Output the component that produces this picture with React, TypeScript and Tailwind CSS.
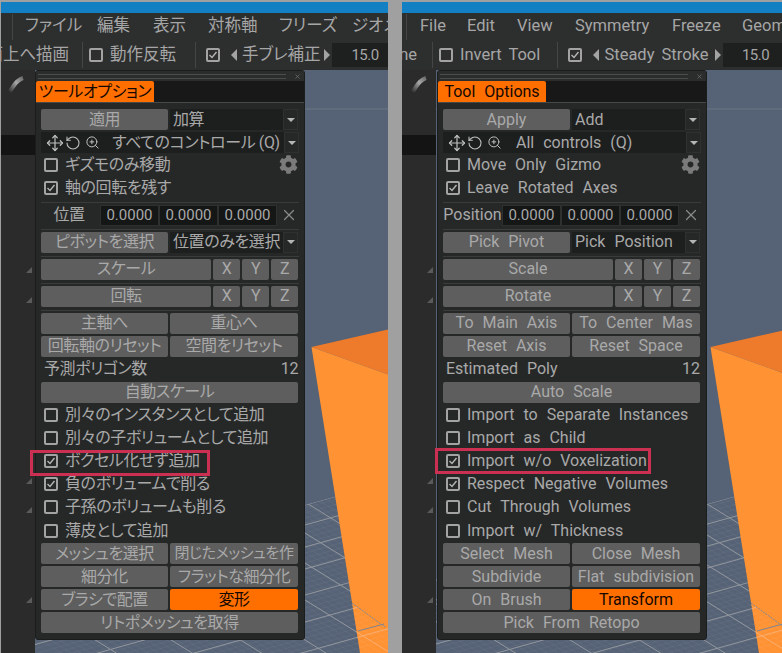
import { Move, RotateCcw, ZoomIn, X } from "lucide-react";
import { FaCog } from "react-icons/fa";

const jaText = {
  menu: [
    { label: "ファイル", cls: "ml-[12px] w-[72px]" },
    { label: "編集", cls: "w-[56px]" },
    { label: "表示", cls: "w-[55px]" },
    { label: "対称軸", cls: "w-[71px]" },
    { label: "フリーズ", cls: "w-[73px]" },
    { label: "ジオメ", cls: "w-[40px]" },
  ],
  cut: "面上へ描画",
  invert: "動作反転",
  steady: "手ブレ補正",
  title: "ツールオプション",
  apply: "適用",
  add: "加算",
  controls: "すべてのコントロール (Q)",
  gizmo: "ギズモのみ移動",
  leave: "軸の回転を残す",
  position: "位置",
  pivot: "ピボットを選択",
  pickPos: "位置のみを選択",
  scale: "スケール",
  rotate: "回転",
  pairs: [
    ["主軸へ", "重心へ"],
    ["回転軸のリセット", "空間をリセット"],
  ],
  poly: "予測ポリゴン数",
  auto: "自動スケール",
  checks: [
    { label: "別々のインスタンスとして追加", on: false },
    { label: "別々の子ボリュームとして追加", on: false },
    { label: "ボクセル化せず追加", on: true },
    { label: "負のボリュームで削る", on: true },
    { label: "子孫のボリュームも削る", on: false },
    { label: "薄皮として追加", on: false },
  ],
  mesh: ["メッシュを選択", "閉じたメッシュを作"],
  subdiv: ["細分化", "フラットな細分化"],
  brush: "ブラシで配置",
  transform: "変形",
  retopo: "リトポメッシュを取得",
};

const enText = {
  menu: [
    { label: "File", cls: "ml-[13px] w-[47px]" },
    { label: "Edit", cls: "w-[50px]" },
    { label: "View", cls: "w-[58px]" },
    { label: "Symmetry", cls: "w-[97px]" },
    { label: "Freeze", cls: "w-[70px]" },
    { label: "Geom", cls: "w-[40px]" },
  ],
  cut: "ne",
  invert: "Invert Tool",
  steady: "Steady Stroke",
  title: "Tool Options",
  apply: "Apply",
  add: "Add",
  controls: "All controls (Q)",
  gizmo: "Move Only Gizmo",
  leave: "Leave Rotated Axes",
  position: "Position",
  pivot: "Pick Pivot",
  pickPos: "Pick Position",
  scale: "Scale",
  rotate: "Rotate",
  pairs: [
    ["To Main Axis", "To Center Mas"],
    ["Reset Axis", "Reset Space"],
  ],
  poly: "Estimated Poly",
  auto: "Auto Scale",
  checks: [
    { label: "Import to Separate Instances", on: false },
    { label: "Import as Child", on: false },
    { label: "Import w/o Voxelization", on: true },
    { label: "Respect Negative Volumes", on: true },
    { label: "Cut Through Volumes", on: false },
    { label: "Import w/ Thickness", on: false },
  ],
  mesh: ["Select Mesh", "Close Mesh"],
  subdiv: ["Subdivide", "Flat subdivision"],
  brush: "On Brush",
  transform: "Transform",
  retopo: "Pick From Retopo",
};

type Strings = typeof jaText;

function CheckBox({ on }: { on: boolean }) {
  return (
    <span className="w-[14px] h-[14px] shrink-0 rounded-[2px] border-2 border-[#a3a3a3] flex items-center justify-center">
      {on && (
        <svg viewBox="0 0 10 10" className="w-[10px] h-[10px]">
          <path d="M1.5 5 L4 7.5 L8.5 2" fill="none" stroke="#b5b5b5" strokeWidth="1.4" />
        </svg>
      )}
    </span>
  );
}

function Btn({ label, className = "" }: { label: string; className?: string }) {
  return (
    <div className={`h-[21px] rounded-[2px] bg-[#5e5e5e] text-[#a9a9a9] flex items-center justify-center whitespace-nowrap overflow-hidden ${className}`}>
      {label}
    </div>
  );
}

function Arrow({ dir }: { dir: "left" | "right" }) {
  return (
    <svg viewBox="0 0 6 12" className="w-[6px] h-[12px] shrink-0">
      <path d={dir === "left" ? "M6 0 L0 6 L6 12 Z" : "M0 0 L6 6 L0 12 Z"} fill="#a3a3a3" />
    </svg>
  );
}

function DropArrow() {
  return (
    <div className="w-[15px] h-[21px] bg-[#262828] border border-[#2f3131] flex items-center justify-center shrink-0">
      <svg viewBox="0 0 8 4" className="w-[8px] h-[4px]">
        <path d="M0 0 L8 0 L4 4 Z" fill="#b5b5b5" />
      </svg>
    </div>
  );
}

function Select({ label, className = "" }: { label: string; className?: string }) {
  return (
    <div className={`flex h-[21px] ${className}`}>
      <div className="flex-1 bg-[#1d1e1e] text-[#a9a9a9] pl-[3px] flex items-center whitespace-nowrap overflow-hidden">{label}</div>
      <DropArrow />
    </div>
  );
}

function Sep() {
  return <div className="h-px bg-[#3a3c3c] mt-[3px] mb-[2px]" />;
}

function NumField() {
  return (
    <div className="w-[59px] h-[21px] shrink-0 bg-[#151616] border border-[#2e3030] text-[#a9a9a9] text-[15px] tracking-normal flex items-center justify-center">
      0.0000
    </div>
  );
}

function AxisRow({ label }: { label: string }) {
  return (
    <div className="flex gap-[2px]">
      <Btn label={label} className="w-[170px]" />
      <Btn label="X" className="w-[27px]" />
      <Btn label="Y" className="w-[27px]" />
      <Btn label="Z" className="w-[27px]" />
    </div>
  );
}

function Pair({ a, b, bClass = "" }: { a: string; b: string; bClass?: string }) {
  return (
    <div className="flex gap-[2px]">
      <Btn label={a} className="w-[127px]" />
      <Btn label={b} className={`w-[128px] ${bClass}`} />
    </div>
  );
}

function CheckRow({ label, on }: { label: string; on: boolean }) {
  return (
    <div className="h-[23.2px] flex items-center gap-[7px] pl-[3px] text-[#a9a9a9] whitespace-nowrap">
      <CheckBox on={on} />
      {label}
    </div>
  );
}

function ToolPanel({ t, spaced }: { t: Strings; spaced: boolean }) {
  return (
    <div className={`absolute top-[68px] w-[270px] h-[570px] rounded-[3px] bg-[#262828] border border-[#1b1c1c] text-[16px] leading-none ${spaced ? "left-[35px]" : "left-[34px] tracking-[-0.4px]"}`}>
      {/* title strip */}
      <div className="h-[10px] flex items-center pl-[2px] pr-[3px] bg-[#2b2d2d] gap-[8px]">
        <div className="flex-1 h-[5px] border-y border-[#4a4c4c]" />
        <X className="w-[7px] h-[7px] text-[#6f6f6f]" strokeWidth={2.5} />
      </div>
      <div className="h-[22px] bg-[#181818] border-b border-[#474949]">
        <div className={`h-[21px] rounded-t-[2px] bg-[#ff6f00] text-[#140800] text-[16px] flex items-center justify-center whitespace-nowrap ${spaced ? "w-[108px]" : "w-[118px]"}`}>
          {t.title}
        </div>
      </div>

      <div className="pl-[5px] pr-[5px] pt-[6px]">
        <div className="flex gap-[2px]">
          <Btn label={t.apply} className="w-[127px]" />
          <Select label={t.add} className="w-[128px]" />
        </div>
        <div className="flex mt-[2px]">
          <div className="flex-1 h-[21px] bg-[#1d1e1e] text-[#a9a9a9] flex items-center pl-[5px] whitespace-nowrap overflow-hidden">
            <Move className="w-[18px] h-[18px] text-[#c0c0c0] shrink-0" strokeWidth={1.6} />
            <RotateCcw className="w-[16px] h-[16px] ml-[1px] text-[#c0c0c0] shrink-0" strokeWidth={1.6} />
            <ZoomIn className="w-[15px] h-[15px] ml-[4px] text-[#c0c0c0] shrink-0" strokeWidth={1.6} />
            <span className={spaced ? "ml-[14px]" : "ml-[12px]"}>{t.controls}</span>
          </div>
          <DropArrow />
        </div>
        <div className="relative">
          <CheckRow label={t.gizmo} on={false} />
          <CheckRow label={t.leave} on={true} />
          <FaCog className="absolute right-[1px] top-[2px] w-[19px] h-[19px] text-[#7b7b7b]" />
        </div>
        <div className="h-px bg-[#3a3c3c] mt-[2.6px] mb-[2px]" />
        <div className="flex items-center h-[21px] text-[#a9a9a9]">
          <div className={`text-center whitespace-nowrap shrink-0 ${spaced ? "w-[59px]" : "w-[56px] mr-[3px]"}`}>{t.position}</div>
          <NumField />
          <NumField />
          <NumField />
          <X className="w-[18px] h-[18px] ml-[3px] shrink-0 text-[#8a8a8a]" strokeWidth={1.6} />
        </div>
        <Sep />
        <div className="flex gap-[2px]">
          <Btn label={t.pivot} className="w-[127px]" />
          <Select label={t.pickPos} className="w-[128px]" />
        </div>
        <Sep />
        <AxisRow label={t.scale} />
        <Sep />
        <AxisRow label={t.rotate} />
        <Sep />
        <div className="flex flex-col gap-[2px]">
          <Pair a={t.pairs[0][0]} b={t.pairs[0][1]} />
          <Pair a={t.pairs[1][0]} b={t.pairs[1][1]} />
        </div>
        <div className="h-[25px] flex items-center justify-between pl-[3px] pr-[1px] text-[#a9a9a9]">
          <span>{t.poly}</span>
          <span>12</span>
        </div>
        <Btn label={t.auto} className="w-[257px]" />
        <div>
          {t.checks.map((c) => (
            <CheckRow key={c.label} label={c.label} on={c.on} />
          ))}
        </div>
        <div className="flex flex-col gap-[2px] mt-[1px]">
          <Pair a={t.mesh[0]} b={t.mesh[1]} bClass={spaced ? "" : "text-[15px]"} />
          <Pair a={t.subdiv[0]} b={t.subdiv[1]} />
          <div className="flex gap-[2px]">
            <Btn label={t.brush} className="w-[127px]" />
            <Btn label={t.transform} className="w-[128px] !bg-[#ff6f00] !text-[#140800]" />
          </div>
          <Btn label={t.retopo} className="w-[257px]" />
        </div>
      </div>
    </div>
  );
}

// ground grid, offsets measured at local x = 270, y in viewport coordinates
const majorA = [435, 455, 477, 499, 525, 552, 582];
const majorB = [395, 432, 463, 493, 530, 570, 610, 653, 700];
const minorA = Array.from({ length: 34 }, (_, i) => 428 + i * 5);
const minorB = Array.from({ length: 60 }, (_, i) => 380 + i * 6);

function GridLines({ major, minor }: { major: string; minor: string }) {
  const a = (y: number) => ({ x1: 0, y1: y + 0.28 * 270, x2: 360, y2: y - 0.28 * 90 });
  const b = (y: number) => ({ x1: 0, y1: y - 0.62 * 270, x2: 360, y2: y + 0.62 * 90 });
  return (
    <g>
      {minorA.map((y) => (
        <line key={`na${y}`} {...a(y)} stroke={minor} strokeWidth="0.5" opacity="0.3" />
      ))}
      {minorB.map((y) => (
        <line key={`nb${y}`} {...b(y)} stroke={minor} strokeWidth="0.5" opacity="0.3" />
      ))}
      {majorA.map((y) => (
        <line key={`ma${y}`} {...a(y)} stroke={major} strokeWidth="1" />
      ))}
      {majorB.map((y) => (
        <line key={`mb${y}`} {...b(y)} stroke={major} strokeWidth="1" />
      ))}
    </g>
  );
}

function Scene({ className, id }: { className: string; id: string }) {
  return (
    <svg viewBox="0 0 360 583" className={`absolute top-0 w-[360px] h-[583px] ${className}`}>
      <defs>
        <clipPath id={`${id}-ground`}>
          <polygon points="0,510 270,435 360,410 360,583 0,583" />
        </clipPath>
        <clipPath id={`${id}-tip`}>
          <polygon points="317,533 350,557 360,557 360,583 325,583" />
        </clipPath>
      </defs>
      <line x1="0" y1="39" x2="360" y2="39" stroke="#6a7484" strokeWidth="1" />
      <g clipPath={`url(#${id}-ground)`}>
        <GridLines major="#92979d" minor="#8b95a5" />
      </g>
      <polygon points="276.5,277 360,258 360,307" fill="#ee7b2b" />
      <polygon points="276.5,277 360,307 360,583 325,583" fill="#ff9233" />
      <g clipPath={`url(#${id}-tip)`}>
        <GridLines major="#f9ad70" minor="#fbb880" />
      </g>
      <line x1="317" y1="533" x2="350" y2="557" stroke="#7d8794" strokeWidth="1" strokeDasharray="2 1" />
      <line x1="323" y1="561" x2="349" y2="554" stroke="#7d8794" strokeWidth="1" />
    </svg>
  );
}

const sideMarks = [
  "top-[197px]",
  "top-[227px]",
  "top-[408px]",
  "top-[437px]",
  "top-[527px]",
];

function Screen({ t, spaced }: { t: Strings; spaced: boolean }) {
  const id = spaced ? "en" : "ja";
  return (
    <div className={`relative h-[651px] overflow-hidden bg-[#2b2b2b] ${spaced ? "w-[380px]" : "w-[387px]"}`}>
      <div className="h-[11px] bg-[#1480c4]" />
      {/* menu bar */}
      <div className="h-[27px] bg-[#2d2e2e] flex items-center text-[#a6a6a6] text-[16.5px] whitespace-nowrap">
        <div className={`shrink-0 ${spaced ? "w-[4px]" : "w-[11px]"}`} />
        <div className="w-px h-[26px] shrink-0 bg-[#454545]" />
        {t.menu.map((m) => (
          <div key={m.label} className={`shrink-0 ${m.cls}`}>{m.label}</div>
        ))}
      </div>
      {/* tool strip */}
      <div className="h-[30px] bg-[#2d2e2e] flex items-center text-[#a6a6a6] text-[16.5px] whitespace-nowrap [word-spacing:3px]">
        <div className={`overflow-hidden shrink-0 flex justify-end [font-feature-settings:normal] ${spaced ? "w-[15px]" : "w-[68px]"}`}>{t.cut}</div>
        <div className={`w-px h-[26px] bg-[#454545] shrink-0 ${spaced ? "ml-[15px]" : "ml-[13px]"}`} />
        <div className="ml-[6px] mr-[7px]">
          <CheckBox on={false} />
        </div>
        <div className={`shrink-0 ${spaced ? "w-[97px]" : "w-[85px]"}`}>{t.invert}</div>
        <div className="w-px h-[26px] bg-[#454545] shrink-0" />
        <div className="ml-[10px] mr-[11px]">
          <CheckBox on={true} />
        </div>
        <Arrow dir="left" />
        <div className={`shrink-0 text-center ml-[5px] mr-[6px] ${spaced ? "w-[105px]" : "w-[76px]"}`}>{t.steady}</div>
        <Arrow dir="right" />
        <div className={`ml-[2px] flex-1 h-[24px] bg-[#1e1f1f] text-[#a6a6a6] text-[15px] tracking-[-0.5px] flex items-center justify-center ${spaced ? "pl-[6px]" : "pl-[10px]"}`}>15.0</div>
      </div>
      {/* sidebar + viewport */}
      <div className="flex h-[583px]">
        <div className="relative w-[34px] shrink-0 bg-[#2b2b2b]">
          <svg viewBox="0 0 20 20" className={`absolute top-[5px] w-[20px] h-[20px] blur-[0.6px] ${spaced ? "left-[7px]" : "left-[5px]"}`}>
            <defs>
              <linearGradient id={`${id}-stroke`} x1="0" y1="1" x2="1" y2="0">
                <stop offset="0" stopColor="#2b2b2b" />
                <stop offset="0.6" stopColor="#a8a8a8" />
                <stop offset="1" stopColor="#6b6b6b" />
              </linearGradient>
            </defs>
            <path d="M3 17 C 7 14, 8 6, 17 3" fill="none" stroke={`url(#${id}-stroke)`} strokeWidth="4" />
          </svg>
          <div className="absolute left-0 right-0 top-[65px] h-[20px] bg-[#141414]" />
          {sideMarks.map((m) => (
            <svg key={m} viewBox="0 0 6 6" className={`absolute right-[3px] w-[6px] h-[6px] ${m}`}>
              <path d="M6 0 L6 6 L0 6 Z" fill="#5a5a5a" />
            </svg>
          ))}
        </div>
        <div className="relative flex-1 bg-[#566275] overflow-hidden">
          <Scene id={id} className={spaced ? "left-[-2px]" : "left-0"} />
        </div>
      </div>
      <ToolPanel t={t} spaced={spaced} />
      {/* highlight around the option being discussed */}
      <div
        className={`absolute border-[3px] border-[#cb2f52] ${
          spaced ? "left-[33px] top-[446px] w-[216px] h-[26px]" : "left-[29px] top-[448px] w-[180px] h-[26px]"
        }`}
      />
    </div>
  );
}

export default function App() {
  return (
    <div className="w-[782px] h-[653px] overflow-hidden bg-[#a0a0a0] pt-[2px] flex font-['Roboto','Noto_Sans_CJK_JP',sans-serif] [font-feature-settings:'palt']">
      <div className="ml-px">
        <Screen t={jaText} spaced={false} />
      </div>
      <div className="ml-[14px] [word-spacing:5px]">
        <Screen t={enText} spaced={true} />
      </div>
    </div>
  );
}
